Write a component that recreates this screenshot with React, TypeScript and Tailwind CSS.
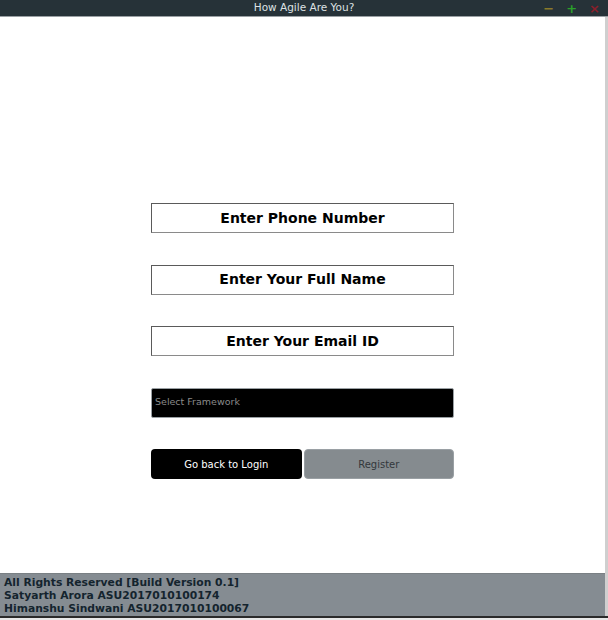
export default function App() {
  const field =
    'flex h-[30px] w-[303px] items-center justify-center border border-[#5a5a5a] border-b-[#8a8a8a] border-r-[#8a8a8a] bg-white text-[14px] font-bold text-black'

  return (
    <div
      className="flex h-[620px] w-[608px] flex-col bg-white"
      style={{ fontFamily: '"DejaVu Sans", Verdana, sans-serif' }}
    >
      {/* Title bar */}
      <div className="relative flex h-[17px] shrink-0 items-center justify-center border-b border-[#9aa0a4] bg-[#263238] text-[10.5px] text-[#dde1e3]">
        How Agile Are You?
        <div className="absolute right-[8px] top-0 flex h-full items-center gap-[12px] text-[13px] font-bold leading-none">
          <span className="text-[#8a7a2a]">−</span>
          <span className="text-[#2aa02a]">+</span>
          <span className="text-[#8a1f2a]">×</span>
        </div>
      </div>

      <div className="flex flex-1 flex-row">
        <div className="flex flex-1 flex-col">
          {/* Form */}
          <div className="flex flex-1 flex-col pl-[151px] pt-[186px]">
            <div className="flex flex-col gap-[31.5px]">
              <div className={field}>Enter Phone Number</div>
              <div className={field}>Enter Your Full Name</div>
              <div className={field}>Enter Your Email ID</div>
              <div className="flex h-[30px] w-[303px] items-center rounded-[2px] border border-[#9aa0a4] bg-black pl-[3px] text-[9.5px] text-[#8a8a8a]">
                Select Framework
              </div>
              <div className="flex w-[303px] gap-[2px]">
                <button className="h-[30px] w-[150.5px] rounded-[4px] bg-black text-[10px] text-white">
                  Go back to Login
                </button>
                <button className="h-[30px] w-[150.5px] rounded-[4px] border border-[#9aa0a4] bg-[#858b8f] text-[10px] text-[#33383c]">
                  Register
                </button>
              </div>
            </div>
          </div>

          {/* Footer */}
          <div className="flex h-[43px] shrink-0 flex-col justify-center border-t border-[#7a8084] bg-[#858c92] pl-[4px] text-[10.75px] font-bold leading-[13px] text-[#14242e]">
            <span>All Rights Reserved [Build Version 0.1]</span>
            <span>Satyarth Arora ASU2017010100174</span>
            <span>Himanshu Sindwani ASU2017010100067</span>
          </div>
        </div>
        <div className="w-[3px] shrink-0 bg-[#cfcfcf]" />
      </div>
      <div className="h-[2px] shrink-0 bg-[#2a2a2a]" />
      <div className="h-[2px] shrink-0 bg-[#e8e8e8]" />
    </div>
  )
}
